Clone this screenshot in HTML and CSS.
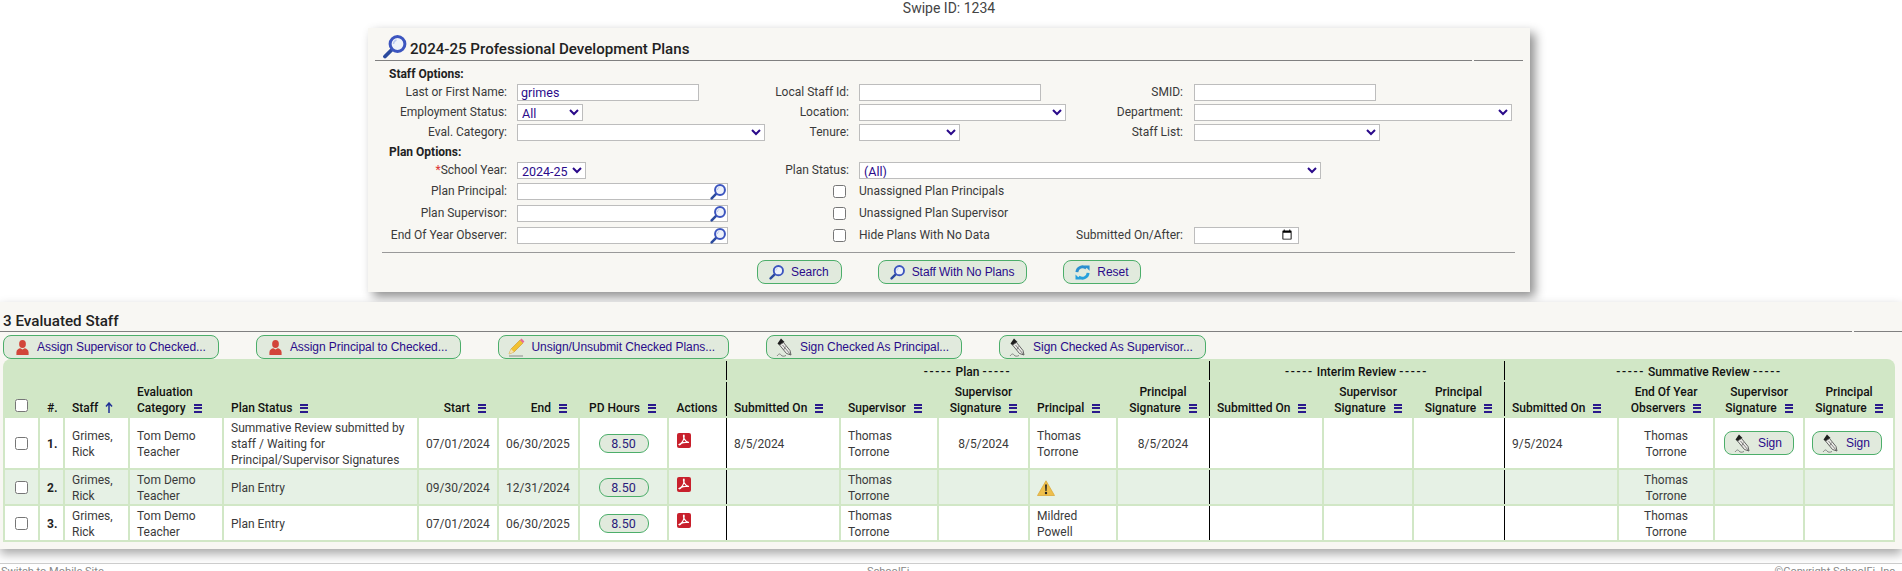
FILE: index.html
```html
<!DOCTYPE html>
<html lang="en">
<head>
<meta charset="utf-8">
<title>2024-25 Professional Development Plans</title>
<link rel="stylesheet" href="styles.css">
</head>
<body>
<svg class="sprite" xmlns="http://www.w3.org/2000/svg">
  <symbol id="i-mag" viewBox="0 0 24 24">
    <path d="M9.500 14.500 2.500 21.500" stroke="#2b4a9e" stroke-width="3.800" stroke-linecap="round" fill="none"/>
    <circle cx="15" cy="9" r="7.400" fill="#eef2fa" stroke="#3c55bf" stroke-width="3"/>
    <path d="M11 9a4.500 4.500 0 0 1 3-4" stroke="#b9c7ee" stroke-width="1.400" fill="none"/>
  </symbol>
  <symbol id="i-person" viewBox="0 0 14 16">
    <ellipse cx="7" cy="4.200" rx="3.600" ry="4.200" fill="#d2453a"/>
    <path d="M.5 16v-3c0-2.600 2.500-4 4.200-4.200L7 10l2.300-1.200c1.700.2 4.200 1.600 4.200 4.200v3z" fill="#d2453a"/>
  </symbol>
  <symbol id="i-pencil" viewBox="0 0 17 19">
    <path d="M1 16 3 11 12 2 15 5 6 14z" fill="#f2c230" stroke="#c9962a" stroke-width=".6"/>
    <path d="M1 16 3 11 6 14z" fill="#f4e2b4"/>
    <path d="M12 2 13.500.6 16.400 3.400 15 5z" fill="#e66a9a"/>
    <path d="M1 18h14" stroke="#9a9a9a" stroke-width="1.200"/>
  </symbol>
  <symbol id="i-sign" viewBox="0 0 17 19">
    <path d="M1.500 5.500 5 .5 8.500 4 6 6.500 3 7z" fill="#1e1e1e"/>
    <path d="M3.500 7 7.500 4.500 14 12.500 15 17 10.500 15.500z" fill="#ecece8" stroke="#555" stroke-width=".9"/>
    <path d="M6.500 7 14.500 16.500M9.500 8.500 7.500 12" stroke="#666" stroke-width=".8" fill="none"/>
    <path d="M1 18c2-2.500 3-2.500 4-1s3 1.500 5 .5" stroke="#777" stroke-width=".9" fill="none"/>
  </symbol>
  <symbol id="i-reset" viewBox="0 0 16 16">
    <path d="M2 7.500a6 6 0 0 1 10-4" stroke="#2a8fd0" stroke-width="3" fill="none"/>
    <path d="M10 .5h5.500v5.500z" fill="#2a8fd0"/>
    <path d="M14 8.500a6 6 0 0 1-10 4" stroke="#25a0dc" stroke-width="3" fill="none"/>
    <path d="M6 15.500H.5V10z" fill="#25a0dc"/>
  </symbol>
  <symbol id="i-pdf" viewBox="0 0 14 15">
    <rect width="14" height="15" rx="2" fill="#c8202c"/>
    <path d="M2 11.500c2.500-1 4.500-3.500 5-7 .2-1.500.3-2.500-.2-2.500s-.5 2 .5 4c.8 1.700 2 3 4.700 3.500-2.500-.3-6-.2-7.500.8C3.500 11 2.800 12.500 2 11.500z" fill="none" stroke="#fff" stroke-width="1.200"/>
  </symbol>
  <symbol id="i-warn" viewBox="0 0 18 16">
    <path d="M9 .8 17.500 15.500H.5z" fill="#eebf4c" stroke="#dca93a" stroke-width=".8" stroke-linejoin="round"/>
    <path d="M8.100 4.500h1.800l-.3 6.500H8.400z" fill="#222"/>
    <circle cx="9" cy="13" r="1.200" fill="#222"/>
  </symbol>
  <symbol id="i-up" viewBox="0 0 8 11">
    <path d="M4 11V2M1 4.500 4 1l3 3.500" stroke="#1f2f96" stroke-width="1.500" fill="none"/>
  </symbol>
</svg>

<div class="swipe">Swipe ID: 1234</div>

<section class="panel">
  <div class="title-bar">
    <h1 class="title-text"><svg class="i-title"><use href="#i-mag"/></svg>2024-25 Professional Development Plans</h1>
    <div class="title-end"></div>
  </div>

  <div class="form-head">Staff Options:</div>
  <div class="form-grid form-staff">
    <label class="lbl">Last or First Name:</label>
    <div><input class="ctl w-name" type="text" value="grimes"></div>
    <label class="lbl">Local Staff Id:</label>
    <div><input class="ctl w-name" type="text"></div>
    <label class="lbl lbl3">SMID:</label>
    <div><input class="ctl w-name" type="text"></div>

    <label class="lbl">Employment Status:</label>
    <div><select class="ctl w-emp"><option>All</option></select></div>
    <label class="lbl">Location:</label>
    <div><select class="ctl w-loc"><option></option></select></div>
    <label class="lbl lbl3">Department:</label>
    <div><select class="ctl w-dept"><option></option></select></div>

    <label class="lbl">Eval. Category:</label>
    <div><select class="ctl w-eval"><option></option></select></div>
    <label class="lbl">Tenure:</label>
    <div><select class="ctl w-ten"><option></option></select></div>
    <label class="lbl lbl3">Staff List:</label>
    <div><select class="ctl w-list"><option></option></select></div>
  </div>

  <div class="form-head form-head-2">Plan Options:</div>
  <div class="form-grid form-plan">
    <label class="lbl"><span class="req">*</span>School Year:</label>
    <div><select class="ctl w-year"><option>2024-25</option></select></div>
    <label class="lbl">Plan Status:</label>
    <div class="span3"><select class="ctl w-status"><option>(All)</option></select></div>

    <label class="lbl">Plan Principal:</label>
    <div class="lookup"><input class="ctl w-look" type="text"><svg class="i-look"><use href="#i-mag"/></svg></div>
    <div class="chk-cell"><input class="chk" type="checkbox"></div>
    <div class="span3 txt">Unassigned Plan Principals</div>

    <label class="lbl">Plan Supervisor:</label>
    <div class="lookup"><input class="ctl w-look" type="text"><svg class="i-look"><use href="#i-mag"/></svg></div>
    <div class="chk-cell"><input class="chk" type="checkbox"></div>
    <div class="span3 txt">Unassigned Plan Supervisor</div>

    <label class="lbl">End Of Year Observer:</label>
    <div class="lookup"><input class="ctl w-look" type="text"><svg class="i-look"><use href="#i-mag"/></svg></div>
    <div class="chk-cell"><input class="chk" type="checkbox"></div>
    <div class="txt">Hide Plans With No Data</div>
    <label class="lbl lbl3">Submitted On/After:</label>
    <div><input class="ctl w-date" type="date"></div>
  </div>

  <div class="form-actions">
    <button class="btn" type="button"><svg class="i-btn"><use href="#i-mag"/></svg>Search</button>
    <button class="btn" type="button"><svg class="i-btn"><use href="#i-mag"/></svg>Staff With No Plans</button>
    <button class="btn" type="button"><svg class="i-btn"><use href="#i-reset"/></svg>Reset</button>
  </div>
</section>

<section class="results">
  <div class="res-bar">
    <h2 class="res-title">3 Evaluated Staff</h2>
    <div class="res-end"></div>
  </div>
  <div class="bulk">
    <button class="btn" type="button"><svg class="i-btn"><use href="#i-person"/></svg>Assign Supervisor to Checked...</button>
    <button class="btn" type="button"><svg class="i-btn"><use href="#i-person"/></svg>Assign Principal to Checked...</button>
    <button class="btn btn-wide" type="button"><svg class="i-btn i-tall"><use href="#i-pencil"/></svg>Unsign/Unsubmit Checked Plans...</button>
    <button class="btn" type="button"><svg class="i-btn i-tall"><use href="#i-sign"/></svg>Sign Checked As Principal...</button>
    <button class="btn" type="button"><svg class="i-btn i-tall"><use href="#i-sign"/></svg>Sign Checked As Supervisor...</button>
  </div>

  <table class="grid">
    <colgroup>
      <col class="c33"><col class="c23"><col class="c63"><col class="c92"><col class="c193"><col class="c78"><col class="c79"><col class="c87"><col class="c56">
      <col class="c112"><col class="c96"><col class="c89"><col class="c86"><col class="c90">
      <col class="c112"><col class="c88"><col class="c89">
      <col class="c112"><col class="c94"><col class="c88"><col class="c88">
    </colgroup>
    <thead>
      <tr class="band">
        <th colspan="9"></th>
        <th colspan="5" class="div"><span class="dash">-----</span> Plan <span class="dash">-----</span></th>
        <th colspan="3" class="div"><span class="dash">-----</span> Interim Review <span class="dash">-----</span></th>
        <th colspan="4" class="div"><span class="dash">-----</span> Summative Review <span class="dash">-----</span></th>
      </tr>
      <tr class="heads">
        <th class="ctr"><input class="chk" type="checkbox"></th>
        <th>#.</th>
        <th>Staff<svg class="i-up"><use href="#i-up"/></svg></th>
        <th>Evaluation<br>Category<span class="menu"></span></th>
        <th>Plan Status<span class="menu"></span></th>
        <th class="rgt">Start<span class="menu"></span></th>
        <th class="rgt">End<span class="menu"></span></th>
        <th class="rgt">PD Hours<span class="menu"></span></th>
        <th class="ctr">Actions</th>
        <th class="div">Submitted On<span class="menu"></span></th>
        <th>Supervisor<span class="menu"></span></th>
        <th class="ctr">Supervisor<br>Signature<span class="menu"></span></th>
        <th>Principal<span class="menu"></span></th>
        <th class="ctr">Principal<br>Signature<span class="menu"></span></th>
        <th class="div">Submitted On<span class="menu"></span></th>
        <th class="ctr">Supervisor<br>Signature<span class="menu"></span></th>
        <th class="ctr">Principal<br>Signature<span class="menu"></span></th>
        <th class="div">Submitted On<span class="menu"></span></th>
        <th class="ctr">End Of Year<br>Observers<span class="menu"></span></th>
        <th class="ctr">Supervisor<br>Signature<span class="menu"></span></th>
        <th class="ctr">Principal<br>Signature<span class="menu"></span></th>
      </tr>
    </thead>
    <tbody>
      <tr class="r-tall">
        <td class="ctr tool"><input class="chk" type="checkbox"></td>
        <td class="num">1.</td>
        <td>Grimes,<br>Rick</td>
        <td>Tom Demo<br>Teacher</td>
        <td>Summative Review submitted by<br>staff / Waiting for<br>Principal/Supervisor Signatures</td>
        <td>07/01/2024</td>
        <td>06/30/2025</td>
        <td class="ctr tool"><span class="pill">8.50</span></td>
        <td class="tool"><svg class="i-pdf"><use href="#i-pdf"/></svg></td>
        <td class="div">8/5/2024</td>
        <td>Thomas<br>Torrone</td>
        <td class="ctr">8/5/2024</td>
        <td>Thomas<br>Torrone</td>
        <td class="ctr">8/5/2024</td>
        <td class="div"></td>
        <td></td>
        <td></td>
        <td class="div">9/5/2024</td>
        <td class="ctr">Thomas<br>Torrone</td>
        <td class="ctr tool"><button class="btn btn-sign" type="button"><svg class="i-btn i-tall"><use href="#i-sign"/></svg>Sign</button></td>
        <td class="ctr tool"><button class="btn btn-sign btn-last" type="button"><svg class="i-btn i-tall"><use href="#i-sign"/></svg>Sign</button></td>
      </tr>
      <tr class="r-alt">
        <td class="ctr tool"><input class="chk" type="checkbox"></td>
        <td class="num">2.</td>
        <td>Grimes,<br>Rick</td>
        <td>Tom Demo<br>Teacher</td>
        <td>Plan Entry</td>
        <td>09/30/2024</td>
        <td>12/31/2024</td>
        <td class="ctr tool"><span class="pill">8.50</span></td>
        <td class="tool"><svg class="i-pdf"><use href="#i-pdf"/></svg></td>
        <td class="div"></td>
        <td>Thomas<br>Torrone</td>
        <td></td>
        <td><svg class="i-warn"><use href="#i-warn"/></svg></td>
        <td></td>
        <td class="div"></td>
        <td></td>
        <td></td>
        <td class="div"></td>
        <td class="ctr">Thomas<br>Torrone</td>
        <td></td>
        <td></td>
      </tr>
      <tr class="r-std">
        <td class="ctr tool"><input class="chk" type="checkbox"></td>
        <td class="num">3.</td>
        <td>Grimes,<br>Rick</td>
        <td>Tom Demo<br>Teacher</td>
        <td>Plan Entry</td>
        <td>07/01/2024</td>
        <td>06/30/2025</td>
        <td class="ctr tool"><span class="pill">8.50</span></td>
        <td class="tool"><svg class="i-pdf"><use href="#i-pdf"/></svg></td>
        <td class="div"></td>
        <td>Thomas<br>Torrone</td>
        <td></td>
        <td>Mildred<br>Powell</td>
        <td></td>
        <td class="div"></td>
        <td></td>
        <td></td>
        <td class="div"></td>
        <td class="ctr">Thomas<br>Torrone</td>
        <td></td>
        <td></td>
      </tr>
    </tbody>
  </table>
</section>

<footer class="foot">
  <div>Switch to Mobile Site</div>
  <div>SchoolFi</div>
  <div class="foot-r">©Copyright SchoolFi, Inc</div>
</footer>
</body>
</html>
```
FILE: styles.css
```css
html, body {
  margin: 0;
  height: 571px;
  overflow: hidden;
  background: #fff;
}
body {
  font-family: Roboto, "Liberation Sans", sans-serif;
  font-size: 12px;
  color: #3a3a3a;
}
.sprite {
  display: block;
  width: 0;
  height: 0;
}

.swipe {
  box-sizing: border-box;
  width: 1902px;
  height: 28px;
  padding: 1px 4px 0 0;
  line-height: 14px;
  font-size: 14px;
  text-align: center;
  color: #444;
}

.panel {
  box-sizing: border-box;
  width: 1162px;
  height: 264px;
  margin-left: 368px;
  padding: 0 7px;
  background: #f8f7f3;
  box-shadow: 5px 5px 10px #8f8f8f;
}
.title-bar {
  display: flex;
  gap: 2px;
  width: 1148px;
  height: 33px;
}
.title-text {
  flex: 1;
  margin: 0;
  display: flex;
  align-items: flex-end;
  box-sizing: border-box;
  padding-left: 7px;
  font-size: 15.1px;
  font-weight: 500;
  line-height: 21px;
  color: #222;
  border-bottom: 1px solid #808080;
}
.title-end {
  width: 49px;
  border-bottom: 1px solid #808080;
}
.i-title {
  width: 25px;
  height: 24px;
  margin: 0 3px 1px 0;
}

.form-head {
  font-weight: 700;
  color: #222;
  line-height: 14px;
  margin: 6px 0 3px 14px;
}
.form-head-2 {
  margin-top: 4px;
  margin-bottom: 3px;
}
.form-grid {
  display: grid;
  grid-template-columns: 142px 248px 94px 207px 128px 318px;
  align-items: start;
}
.form-staff {
  grid-auto-rows: 17px;
  row-gap: 3px;
}
.form-plan {
  grid-template-rows: 16px 17px 17px 17px;
  row-gap: 5px;
}
.lbl {
  display: block;
  text-align: right;
  padding-right: 10px;
  line-height: 17px;
  white-space: nowrap;
}
.lbl3 {
  padding-right: 11px;
}
.req {
  color: #d33;
}
.txt {
  line-height: 17px;
}
.span3 {
  grid-column: span 3;
}
.ctl {
  display: block;
  box-sizing: border-box;
  height: 17px;
  margin: 0;
  padding: 0 3px;
  border: 1px solid #bdbdbd;
  border-radius: 0;
  background-color: #fff;
  font-family: Roboto, "Liberation Sans", sans-serif;
  font-size: 12.5px;
  color: #2a0a8a;
}
select.ctl {
  padding: 0;
}
.w-name { width: 182px; }
.w-emp { width: 66px; }
.w-loc { width: 207px; }
.w-dept { width: 318px; }
.w-eval { width: 248px; }
.w-ten { width: 101px; }
.w-list { width: 186px; }
.w-year { width: 69px; }
.w-status { width: 462px; }
.w-look { width: 211px; }
.w-date { width: 105px; }
.w-date::-webkit-datetime-edit {
  visibility: hidden;
}

.lookup {
  position: relative;
  width: 211px;
}
.i-look {
  position: absolute;
  top: 1px;
  right: 2px;
  width: 16px;
  height: 16px;
}
.chk-cell {
  display: flex;
  justify-content: flex-end;
  padding: 2px 13px 0 0;
}
.chk {
  display: block;
  width: 13px;
  height: 13px;
  margin: 0;
}

.form-actions {
  display: flex;
  justify-content: flex-start;
  gap: 36px;
  margin: 8px 0 0 7px;
  padding: 7px 0 0 375px;
  width: 758px;
  border-top: 1px solid #999;
}

.btn {
  display: inline-flex;
  align-items: center;
  box-sizing: border-box;
  height: 24px;
  margin: 0;
  padding: 0 12px 0 11px;
  border: 1px solid #4cae6a;
  border-radius: 8px;
  background: #e1eadd;
  font-family: "Liberation Sans", Arial, sans-serif;
  font-size: 12px;
  letter-spacing: -0.06px;
  color: #2a0a8a;
  white-space: nowrap;
}
.btn-wide {
  padding-right: 13px;
}
.i-btn {
  width: 15px;
  height: 15px;
  margin-right: 7px;
}
.i-tall {
  width: 17px;
  height: 19px;
  margin-left: -2px;
  margin-right: 7px;
}

.results {
  margin-top: 10px;
  height: 247px;
  background: #f8f7f3;
  box-shadow: 0 5px 10px #a8a8a8;
}
.res-bar {
  display: flex;
  gap: 2px;
  height: 30px;
}
.res-title {
  flex: 1;
  margin: 0;
  box-sizing: border-box;
  padding: 10px 0 0 3px;
  font-size: 15.2px;
  font-weight: 500;
  line-height: 18px;
  color: #222;
  border-bottom: 1px solid #808080;
}
.res-end {
  width: 48px;
  border-bottom: 1px solid #808080;
}
.bulk {
  display: flex;
  gap: 37px;
  padding: 3px 0 0 3px;
}

.grid {
  table-layout: fixed;
  width: 1892px;
  margin-left: 3px;
  border-collapse: separate;
  border-spacing: 2px;
  background: #d1e7c6;
  border-radius: 8px 8px 0 0;
  font-size: 12px;
  line-height: 16px;
}
.c23 { width: 23px; }
.c33 { width: 33px; }
.c56 { width: 56px; }
.c63 { width: 63px; }
.c78 { width: 78px; }
.c79 { width: 79px; }
.c86 { width: 86px; }
.c87 { width: 87px; }
.c88 { width: 88px; }
.c89 { width: 89px; }
.c90 { width: 90px; }
.c92 { width: 92px; }
.c94 { width: 94px; }
.c96 { width: 96px; }
.c112 { width: 112px; }
.c193 { width: 193px; }

.grid th, .grid td {
  box-sizing: border-box;
  padding: 0 7px;
  white-space: nowrap;
}
.grid th {
  font-weight: 500;
  color: #111;
  text-align: left;
  vertical-align: bottom;
}
.band th {
  height: 18px;
  padding-top: 3px;
  text-align: center;
  vertical-align: middle;
}
.dash {
  letter-spacing: 1.7px;
}
.heads th {
  height: 34px;
}
.grid td {
  padding-top: 1px;
  background: #fff;
  vertical-align: middle;
}
.grid td.tool {
  padding-top: 0;
}
.grid .r-tall td { height: 50px; }
.grid .r-alt td { height: 34px; background: #e6f1e5; }
.grid .r-std td { height: 34px; }
.grid .ctr { text-align: center; padding-left: 0; padding-right: 0; }
.grid .rgt { text-align: right; padding-left: 0; padding-right: 11px; }
.grid th.ctr .chk { display: inline-block; vertical-align: bottom; margin-bottom: 4px; }
.grid td.ctr .chk { display: inline-block; vertical-align: middle; }
.grid .num { font-weight: 700; color: #222; }

.grid .div { box-shadow: -1px 0 0 #000; }
.grid td.div { box-shadow: -1px 0 0 #000, -2px 0 0 #fff; }
.grid .r-alt td.div { box-shadow: -1px 0 0 #000, -2px 0 0 #e6f1e5; }

.menu {
  display: inline-block;
  width: 8px;
  height: 9px;
  margin-left: 8px;
  vertical-align: -1px;
  background: repeating-linear-gradient(#2a1a8c 0 2px, transparent 2px 3.5px);
}
.i-up {
  width: 8px;
  height: 11px;
  margin-left: 7px;
  vertical-align: -1px;
}
.pill {
  display: inline-block;
  box-sizing: border-box;
  width: 50px;
  height: 19px;
  line-height: 17px;
  border: 1px solid #4cae6a;
  border-radius: 9px;
  background: #e1eadd;
  color: #2a1a7a;
  font-size: 12.5px;
  vertical-align: middle;
}
.i-pdf {
  display: block;
  width: 14px;
  height: 15px;
  margin: 0 0 5px 1px;
}
.i-warn {
  display: block;
  width: 18px;
  height: 16px;
}
.btn-sign {
  width: 70px;
  padding: 0 0 0 11px;
  vertical-align: middle;
}
.btn-last {
  margin-right: 4px;
}

.foot {
  display: grid;
  grid-template-columns: 866px auto 1fr;
  margin-top: 14px;
  padding: 1px 0 0 1px;
  border-top: 1px solid #ccc;
  color: #888;
  font-size: 11px;
  line-height: 14px;
}
.foot-r {
  text-align: right;
  padding-right: 7px;
}
```
